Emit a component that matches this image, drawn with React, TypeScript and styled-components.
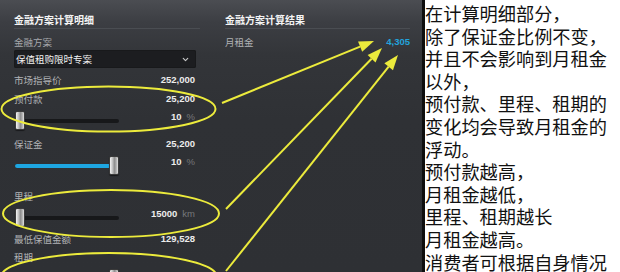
import React from 'react';
import styled, { createGlobalStyle } from 'styled-components';
import { ChevronDown } from 'lucide-react';

const GlobalStyle = createGlobalStyle`
  html, body {
    margin: 0;
    padding: 0;
    background: #fff;
  }
  body {
    width: 620px;
    height: 272px;
    overflow: hidden;
  }
`;

const Page = styled.div`
  display: flex;
  width: 620px;
  height: 272px;
  overflow: hidden;
`;

const Shot = styled.div`
  position: relative;
  flex: none;
  width: 422px;
  height: 272px;
  box-sizing: border-box;
  display: flex;
  gap: 25px;
  padding: 14px 0 0 14px;
  overflow: hidden;
  background: linear-gradient(180deg, #4b4d52 0px, #3c3e43 22px, #333539 55px, #2f3135 120px, #2e3034 100%);
  font-family: "Noto Sans CJK SC", "Liberation Sans", sans-serif;
`;

const Panel = styled.section<{ $w: number }>`
  display: flex;
  flex-direction: column;
  width: ${p => p.$w}px;
  flex: none;
`;

const Title = styled.h2`
  margin: 0;
  padding-bottom: 2px;
  border-bottom: 1px solid #4a4d52;
  font-size: 10px;
  line-height: 12px;
  font-weight: 700;
  color: #f4f4f4;
`;

const Fields = styled.div<{ $inset?: number }>`
  display: flex;
  flex-direction: column;
  margin-right: ${p => p.$inset ?? 0}px;
`;

const FieldLabel = styled.div`
  margin-top: 7px;
  font-size: 9.5px;
  line-height: 12px;
  color: #a6a8ac;
`;

const Select = styled.div`
  display: flex;
  align-items: center;
  justify-content: space-between;
  height: 18px;
  margin: 2px -1px 0 0;
  padding: 0 6px 0 2px;
  border-radius: 2px;
  background: #1c1d20;
  box-shadow: inset 0 0 0 1px #18191b;
  font-size: 9.5px;
  color: #f2f2f2;
`;

const Row = styled.div<{ $gap?: number }>`
  display: flex;
  justify-content: space-between;
  align-items: center;
  margin-top: ${p => p.$gap ?? 7}px;
  font-size: 9.5px;
  line-height: 12px;
`;

const RowLabel = styled.span`
  color: #b1b3b6;
`;

const Amount = styled.span<{ $accent?: boolean }>`
  font-family: "Liberation Sans", Arial, sans-serif;
  font-weight: 700;
  font-size: 9.5px;
  color: ${p => (p.$accent ? '#22a4dc' : '#ececec')};
`;

const SliderRow = styled.div`
  display: flex;
  justify-content: space-between;
  align-items: flex-start;
  height: 20px;
  margin-top: 6px;
`;

const Track = styled.div`
  position: relative;
  width: 104px;
  height: 4px;
  margin: 8px 0 0 1px;
  border-radius: 2px;
  background: #17181a;
`;

const Fill = styled.div`
  position: absolute;
  left: 0;
  top: 0;
  bottom: 0;
  border-radius: 2px;
  background: #1ea6e1;
`;

const Thumb = styled.div`
  position: absolute;
  top: -8px;
  width: 10px;
  height: 19px;
  box-sizing: border-box;
  border: 1px solid #3a3a3a;
  border-radius: 2px;
  background: linear-gradient(90deg, #f4f4f4 0%, #c4c4c4 30%, #8f8f8f 55%, #a9a9a9 75%, #e2e2e2 100%);
  box-shadow: 0 1px 1px rgba(0, 0, 0, 0.5);
`;

const Reading = styled.div`
  display: flex;
  gap: 5px;
  line-height: 12px;
`;

const Unit = styled.span`
  font-family: "Liberation Sans", Arial, sans-serif;
  font-size: 9.5px;
  color: #76787b;
`;

const Overlay = styled.svg`
  position: absolute;
  left: 0;
  top: 0;
  pointer-events: none;
`;

const Note = styled.div`
  flex: 1;
  border-left: 3px solid #0e0e0e;
  padding-top: 2px;
  background: #fff;
  font-family: "Noto Sans CJK SC", sans-serif;
  font-size: 18.2px;
  line-height: 22.6px;
  color: #111;
  white-space: nowrap;
`;

const NoteLine = styled.div``;

function Slider({ value, fill, reading, unit }: { value: number; fill?: boolean; reading?: string; unit?: string }) {
  const left = value * 94;
  return (
    <SliderRow>
      <Track>
        {fill && <Fill style={{ width: left + 5 }} />}
        <Thumb style={{ left }} />
      </Track>
      {reading && (
        <Reading>
          <Amount>{reading}</Amount>
          <Unit>{unit}</Unit>
        </Reading>
      )}
    </SliderRow>
  );
}

const YELLOW = '#eceb3c';

function Arrow({ from, to }: { from: [number, number]; to: [number, number] }) {
  const dx = to[0] - from[0];
  const dy = to[1] - from[1];
  const len = Math.hypot(dx, dy);
  const ux = dx / len;
  const uy = dy / len;
  const bx = to[0] - ux * 15;
  const by = to[1] - uy * 15;
  const nx = -uy * 5.5;
  const ny = ux * 5.5;
  return (
    <g>
      <line x1={from[0]} y1={from[1]} x2={bx} y2={by} stroke={YELLOW} strokeWidth={2} />
      <polygon points={`${to[0]},${to[1]} ${bx + nx},${by + ny} ${bx - nx},${by - ny}`} fill={YELLOW} />
    </g>
  );
}

const noteLines = [
  '在计算明细部分，',
  '除了保证金比例不变，',
  '并且不会影响到月租金',
  '以外，',
  '预付款、里程、租期的',
  '变化均会导致月租金的',
  '浮动。',
  '预付款越高，',
  '月租金越低，',
  '里程、租期越长',
  '月租金越高。',
  '消费者可根据自身情况',
];

export default function App() {
  return (
    <Page>
      <GlobalStyle />
      <Shot>
        <Panel $w={186}>
          <Title>金融方案计算明细</Title>
          <Fields $inset={5}>
            <FieldLabel>金融方案</FieldLabel>
            <Select>
              <span>保值租购限时专案</span>
              <ChevronDown size={9} strokeWidth={3} color="#c9c9c9" />
            </Select>
            <Row $gap={6}>
              <RowLabel>市场指导价</RowLabel>
              <Amount>252,000</Amount>
            </Row>
            <Row>
              <RowLabel>预付款</RowLabel>
              <Amount>25,200</Amount>
            </Row>
            <Slider value={0} reading="10" unit="%" />
            <Row>
              <RowLabel>保证金</RowLabel>
              <Amount>25,200</Amount>
            </Row>
            <Slider value={1} fill reading="10" unit="%" />
            <Row $gap={14}>
              <RowLabel>里程</RowLabel>
            </Row>
            <Slider value={0} reading="15000" unit="km" />
            <Row $gap={5}>
              <RowLabel>最低保值金额</RowLabel>
              <Amount>129,528</Amount>
            </Row>
            <Row $gap={6}>
              <RowLabel>租期</RowLabel>
            </Row>
            <Slider value={1} />
          </Fields>
        </Panel>
        <Panel $w={185}>
          <Title>金融方案计算结果</Title>
          <Row>
            <RowLabel>月租金</RowLabel>
            <Amount $accent>4,305</Amount>
          </Row>
        </Panel>
        <Overlay width={422} height={272} viewBox="0 0 422 272">
          <ellipse cx={108.5} cy={109} rx={107} ry={22.5} fill="none" stroke={YELLOW} strokeWidth={2} />
          <ellipse cx={111} cy={213.5} rx={108} ry={23.5} fill="none" stroke={YELLOW} strokeWidth={2} />
          <ellipse cx={109} cy={277} rx={108} ry={24} fill="none" stroke={YELLOW} strokeWidth={2} />
          <Arrow from={[222, 103]} to={[374, 41]} />
          <Arrow from={[226, 209]} to={[382, 48]} />
          <Arrow from={[226, 271]} to={[398, 55]} />
        </Overlay>
      </Shot>
      <Note>
        {noteLines.map(line => (
          <NoteLine key={line}>{line}</NoteLine>
        ))}
      </Note>
    </Page>
  );
}
